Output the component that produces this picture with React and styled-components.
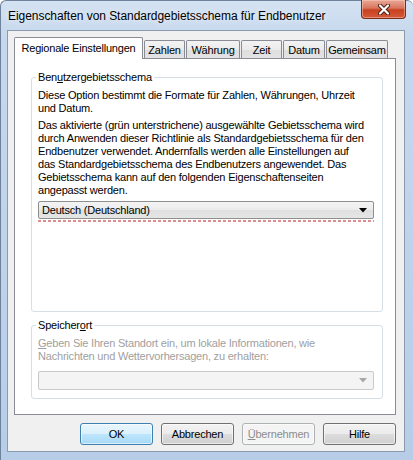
import React from 'react'
import styled, { createGlobalStyle } from 'styled-components'

const Global = createGlobalStyle`
  html, body { margin: 0; padding: 0; overflow: hidden; }
  body {
    font-family: "Liberation Sans", Arial, sans-serif;
    font-size: 11px;
    color: #000;
  }
`

const tabs = [
  { label: 'Regionale Einstellungen', width: 129, active: true },
  { label: 'Zahlen', width: 41 },
  { label: 'Währung', width: 54 },
  { label: 'Zeit', width: 41 },
  { label: 'Datum', width: 42 },
  { label: 'Gemeinsam', width: 62 },
]

const CloseIcon = () => (
  <svg width="14" height="11" viewBox="0 0 14 11">
    <path d="M3 1.5 L11 9.5 M11 1.5 L3 9.5" stroke="#4a1d12" strokeWidth="4" strokeLinecap="round" />
    <path d="M3 1.5 L11 9.5 M11 1.5 L3 9.5" stroke="#fff" strokeWidth="2.2" strokeLinecap="round" />
  </svg>
)

const Arrow = ({ color }) => (
  <svg width="8" height="5" viewBox="0 0 8 5">
    <path d="M0 0 H8 L4 4.5 Z" fill={color} />
  </svg>
)

const App = () => {
  return (
    <Window>
      <Global />
      <TitleBar>
        <Title>Eigenschaften von Standardgebietsschema für Endbenutzer</Title>
        <CloseButton>
          <CloseIcon />
        </CloseButton>
      </TitleBar>
      <Client>
        <TabStrip>
          {tabs.map(t => (
            <Tab key={t.label} $width={t.width} $active={t.active}>{t.label}</Tab>
          ))}
        </TabStrip>
        <Panel>
          <Group $grow>
            <Legend>Ben<u>u</u>tzergebietsschema</Legend>
            <Para>
              Diese Option bestimmt die Formate für Zahlen, Währungen, Uhrzeit<br />
              und Datum.
            </Para>
            <Para $gap>
              Das aktivierte (grün unterstrichene) aus<u>g</u>ewählte Gebietsschema wird<br />
              durch Anwenden dieser Richtlinie als Standardgebietsschema für den<br />
              Endbenutzer verwendet. Andernfalls werden alle Einstellungen auf<br />
              das Standardgebietsschema des Endbenutzers angewendet. Das<br />
              Gebietsschema kann auf den folgenden Eigenschaftenseiten<br />
              angepasst werden.
            </Para>
            <Combo>
              <ComboText>Deutsch (Deutschland)</ComboText>
              <Arrow color="#000" />
            </Combo>
            <DashLine />
          </Group>
          <Group>
            <Legend>Speicher<u>o</u>rt</Legend>
            <Para $disabled>
              <u>G</u>eben Sie Ihren Standort ein, um lokale Informationen, wie<br />
              Nachrichten und Wettervorhersagen, zu erhalten:
            </Para>
            <Combo $disabled>
              <ComboText />
              <Arrow color="#a8a8a8" />
            </Combo>
          </Group>
        </Panel>
        <ButtonRow>
          <Button $default>OK</Button>
          <Button>Abbrechen</Button>
          <Button disabled><u>Ü</u>bernehmen</Button>
          <Button>Hilfe</Button>
        </ButtonRow>
      </Client>
    </Window>
  )
}

export default App

const Window = styled.div`
  width: 413px;
  height: 460px;
  box-sizing: border-box;
  display: flex;
  flex-direction: column;
  background: linear-gradient(to bottom, #d4e2f2 0%, #c6d8ed 8%, #bed2ea 60%, #b7cde7 100%);
  border-left: 1px solid #6f829b;
  border-top: 1px solid #6f829b;
  border-radius: 6px 6px 0 0;
`

const TitleBar = styled.div`
  height: 29px;
  display: flex;
  align-items: flex-start;
  padding: 0 7px 0 7px;
`

const Title = styled.div`
  font-size: 12px;
  letter-spacing: -0.05px;
  line-height: 16px;
  margin-top: 7px;
  white-space: nowrap;
  text-shadow: 0 0 6px rgba(255, 255, 255, 0.9);
`

const CloseButton = styled.div`
  margin-left: auto;
  margin-top: -1px;
  width: 45px;
  height: 19px;
  box-sizing: border-box;
  display: flex;
  align-items: center;
  justify-content: center;
  border: 1px solid #7a2c1c;
  border-top: none;
  border-radius: 0 0 4px 4px;
  background: linear-gradient(to bottom, #e8a897 0%, #d9755d 45%, #c8411f 55%, #d35a3b 100%);
  box-shadow: inset 0 0 0 1px rgba(255, 210, 200, 0.45);
`

const Client = styled.div`
  flex: 1;
  margin: 0 8px 8px 6px;
  display: flex;
  flex-direction: column;
  box-sizing: border-box;
  border: 1px solid #8a9bb0;
  background: #f0f0f0;
  padding: 6px 8px 6px 6px;
`

const TabStrip = styled.div`
  display: flex;
  align-items: flex-end;
  gap: 1px;
`

const Tab = styled.div`
  position: relative;
  z-index: 1;
  box-sizing: border-box;
  width: ${p => p.$width}px;
  height: ${p => (p.$active ? 22 : 18)}px;
  margin-bottom: ${p => (p.$active ? -1 : 0)}px;
  border: 1px solid #898c95;
  border-bottom: ${p => (p.$active ? 'none' : '0')};
  border-radius: 2px 2px 0 0;
  background: ${p => (p.$active ? '#fff' : 'linear-gradient(to bottom, #f3f3f3, #ebebeb 50%, #dedede 51%, #e3e3e3)')};
  display: flex;
  align-items: center;
  justify-content: center;
  padding-bottom: ${p => (p.$active ? 2 : 0)}px;
  letter-spacing: -0.2px;
  white-space: nowrap;
`

const Panel = styled.div`
  flex: 1;
  display: flex;
  flex-direction: column;
  gap: 7px;
  box-sizing: border-box;
  border: 1px solid #898c95;
  background: #fff;
  padding: 12px 12px 15px 16px;
`

const Group = styled.fieldset`
  flex: ${p => (p.$grow ? 1 : 'none')};
  min-width: 0;
  margin: 0;
  padding: 5px 8px 8px 6px;
  border: 1px solid #d5dfe5;
  border-radius: 3px;
  display: flex;
  flex-direction: column;
`

const Legend = styled.legend`
  padding: 0 2px;
  margin-left: -2px;
  line-height: 13px;
  letter-spacing: -0.2px;
`

const Para = styled.div`
  line-height: 13px;
  letter-spacing: -0.2px;
  white-space: nowrap;
  margin-top: ${p => (p.$gap ? 4 : 0)}px;
  color: ${p => (p.$disabled ? '#a0a0a0' : '#000')};
`

const Combo = styled.div`
  margin-top: ${p => (p.$disabled ? 8 : 4)}px;
  height: ${p => (p.$disabled ? 19 : 18)}px;
  box-sizing: border-box;
  display: flex;
  align-items: center;
  padding: 0 6px 0 3px;
  border: 1px solid ${p => (p.$disabled ? '#c9c9c9' : '#8e8f8f')};
  border-radius: 2px;
  background: ${p => (p.$disabled ? '#f4f4f4' : 'linear-gradient(to bottom, #f4f4f4, #ebebeb 50%, #dfdfdf 51%, #e6e6e6)')};
`

const ComboText = styled.span`
  flex: 1;
  letter-spacing: -0.2px;
  white-space: nowrap;
`

const DashLine = styled.div`
  height: 2px;
  margin-top: 1px;
  background: repeating-linear-gradient(to right, #dd8d90 0 3px, transparent 3px 5px);
`

const ButtonRow = styled.div`
  display: flex;
  justify-content: flex-end;
  gap: 8px;
  margin-top: 8px;
`

const Button = styled.button`
  width: 73px;
  height: 22px;
  box-sizing: border-box;
  padding: 0;
  font-family: "Liberation Sans", Arial, sans-serif;
  font-size: 11px;
  letter-spacing: -0.2px;
  color: #000;
  border-radius: 3px;
  border: 1px solid ${p => (p.$default ? '#3c7fb1' : '#707070')};
  background: ${p =>
    p.$default
      ? 'linear-gradient(to bottom, #eaf6fd, #d9f0fc 50%, #bee6fd 51%, #a7d9f5)'
      : 'linear-gradient(to bottom, #f2f2f2, #ebebeb 50%, #dddddd 51%, #cfcfcf)'};
  box-shadow: inset 0 0 0 1px rgba(255, 255, 255, 0.6);

  &:disabled {
    color: #8d8d8d;
    border-color: #adb2b5;
    background: #f4f4f4;
  }
`
